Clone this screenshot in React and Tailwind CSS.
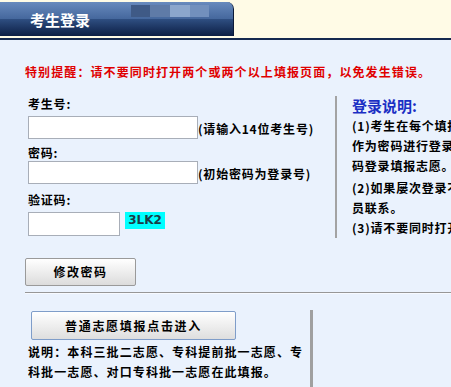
export default function App() {
  const font = { fontFamily: '"Noto Sans CJK SC", "Noto Sans", sans-serif' };
  return (
    <div className="w-[451px] h-[387px] overflow-hidden bg-[#eaf2fd] font-bold text-[12px] text-black" style={font}>
      {/* header */}
      <div className="h-[38px] bg-[#fffbe6] pt-[2px]">
        <div className="relative w-[234px] h-[34px] rounded-tr-[7px] overflow-hidden bg-gradient-to-b from-[#5c7fb3] via-[#2f4f82] to-[#0d1f45] border-r border-[#0c1a38]">
          <div className="absolute left-0 right-0 top-0 h-[17px] bg-gradient-to-b from-[#6b8dc0] to-[#4a6da3] opacity-80"></div>
          <div className="absolute top-[3px] left-[131px] flex">
            <div className="w-[19px] h-[12px] bg-[#3f5a86]"></div>
            <div className="w-[20px] h-[12px] bg-[#5f7ba7]"></div>
            <div className="w-[20px] h-[12px] bg-[#8ba6cc]"></div>
            <div className="w-[19px] h-[12px] bg-[#7290bd]"></div>
          </div>
          <div className="absolute left-[30px] top-[8px] text-white text-[15px] leading-[20px]">考生登录</div>
        </div>
      </div>
      <div className="h-[2px] bg-[#15294f]"></div>

      {/* warning */}
      <div className="mt-[24px] pl-[25px] text-[#e00000] text-[12px] leading-[16px] tracking-[1.1px] whitespace-nowrap">
        特别提醒：请不要同时打开两个或两个以上填报页面，以免发生错误。
      </div>

      {/* main two columns */}
      <div className="flex mt-[15px]">
        <div className="w-[335px] shrink-0 pl-[28px]">
          <div className="leading-[16px] mt-[1px] tracking-[0.8px]">考生号:</div>
          <div className="flex items-end mt-[4px]">
            <div className="w-[170px] shrink-0 h-[23px] bg-white border border-[#a8aeb8]"></div>
            <div className="leading-[16px] mb-[2px] tracking-[0.8px] whitespace-nowrap">(请输入14位考生号)</div>
          </div>
          <div className="leading-[16px] mt-[6px] tracking-[0.8px]">密码:</div>
          <div className="flex items-end mt-[0px]">
            <div className="w-[170px] shrink-0 h-[23px] bg-white border border-[#a8aeb8]"></div>
            <div className="leading-[16px] mb-[2px] tracking-[0.8px] whitespace-nowrap">(初始密码为登录号)</div>
          </div>
          <div className="leading-[16px] mt-[8px] tracking-[0.8px]">验证码:</div>
          <div className="flex items-start mt-[4px]">
            <div className="w-[92px] shrink-0 h-[24px] bg-white border border-[#a8aeb8]"></div>
            <div className="ml-[5px] w-[40px] h-[17px] bg-[#00ffff] text-[#1a3c46] leading-[17px] text-center text-[12px]" style={{ fontFamily: '"DejaVu Sans", sans-serif' }}>3LK2</div>
          </div>
        </div>
        <div className="w-[116px] shrink-0 h-[142px] mt-[1px] border-l-2 border-[#a3a3a3] pl-[15px] overflow-hidden">
          <div className="text-[#1a2fc4] text-[15px] leading-[20px] whitespace-nowrap">登录说明:</div>
          <div className="leading-[20px] tracking-[0.8px] whitespace-nowrap">
            <div>(1)考生在每个填报阶段</div>
            <div>作为密码进行登录，登录</div>
            <div>码登录填报志愿。</div>
            <div className="mt-[2px]">(2)如果屡次登录不成功</div>
            <div>员联系。</div>
            <div>(3)请不要同时打开两个</div>
          </div>
        </div>
      </div>

      {/* change password */}
      <div className="mt-[20px] pl-[25px]">
        <div className="w-[111px] h-[28px] border border-[#9a9a9a] rounded-[2px] bg-gradient-to-b from-white to-[#dcdcdc] flex items-center justify-center tracking-[1.5px]">修改密码</div>
      </div>
      <div className="ml-[25px] mt-[6px] h-[1px] bg-[#979797]"></div>
      <div className="ml-[25px] h-[1px] bg-[#f7faff]"></div>

      {/* bottom box */}
      <div className="mt-[16px] ml-[28px] w-[285px] h-[80px] border-r-[3px] border-[#a0a0a0]">
        <div className="ml-[3px] pt-[1px]">
          <div className="w-[205px] h-[29px] border border-[#7f9dc9] rounded-[2px] bg-gradient-to-b from-white to-[#dedede] flex items-center justify-center tracking-[1.7px] text-[12px]">普通志愿填报点击进入</div>
        </div>
        <div className="leading-[20px] tracking-[1.1px] whitespace-nowrap mt-[2px]">
          <div>说明：本科三批二志愿、专科提前批一志愿、专</div>
          <div>科批一志愿、对口专科批一志愿在此填报。</div>
        </div>
      </div>
    </div>
  );
}
